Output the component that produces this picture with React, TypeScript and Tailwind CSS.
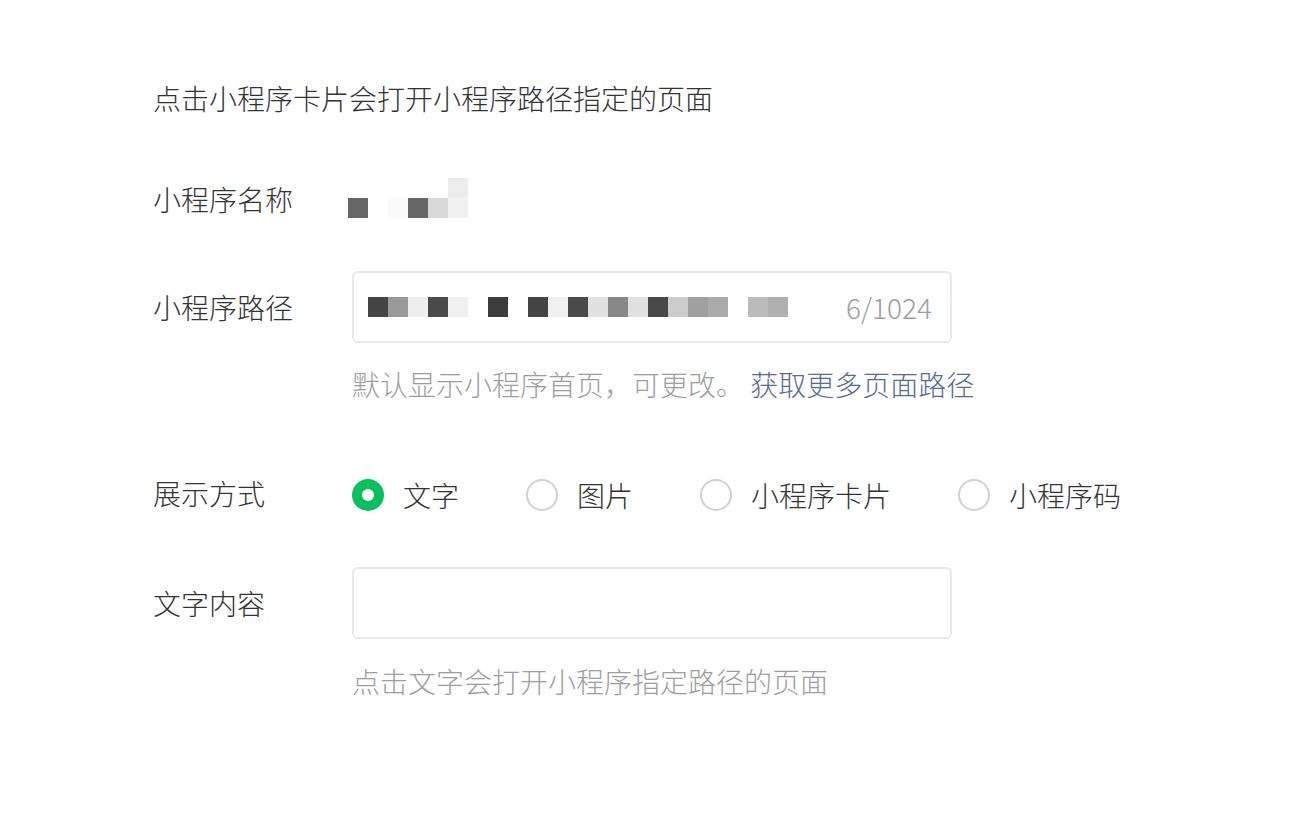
import React from "react";

const F = { fontFamily: '"Noto Sans CJK SC", "Noto Sans", sans-serif' };

const pathBlocks = [
  "#444444", "#999999", "#eeeeee", "#4a4a4a", "#f0f0f0", "", "#3c3c3c", "",
  "#444444", "#f0f0f0", "#4a4a4a", "#e0e0e0", "#888888", "#e0e0e0", "#484848",
  "#cccccc", "#a0a0a0", "#aaaaaa", "", "#bbbbbb", "#b0b0b0",
];

const nameTop = ["", "", "", "", "", "#ededed"];
const nameBottom = ["#666666", "", "#fafafa", "#666666", "#d8d8d8", "#f0f0f0"];

function Blocks({ colors }: { colors: string[] }) {
  return (
    <div className="flex">
      {colors.map((c, i) => (
        <div key={i} className="w-[20px] h-[20px]" style={{ backgroundColor: c || "transparent" }} />
      ))}
    </div>
  );
}

function Radio({ label, checked, first }: { label: string; checked?: boolean; first?: boolean }) {
  return (
    <div className={`flex items-center ${first ? "" : "ml-[67px]"}`}>
      {checked ? (
        <div className="w-[32px] h-[32px] rounded-full bg-[#07c160] flex items-center justify-center">
          <div className="w-[12px] h-[12px] rounded-full bg-white" />
        </div>
      ) : (
        <div className="w-[32px] h-[32px] rounded-full border-2 border-[#d0d1d6] bg-white" />
      )}
      <span className="ml-[19px] text-[28px] leading-[40px] text-[#333333] font-light">{label}</span>
    </div>
  );
}

export default function App() {
  return (
    <div className="w-[1312px] h-[824px] bg-white overflow-hidden font-light" style={F}>
      <div className="pl-[153px] pt-[78px]">
        <div className="text-[28px] leading-[40px] text-[#333333]">点击小程序卡片会打开小程序路径指定的页面</div>

        <div className="flex items-center mt-[61px] h-[40px]">
          <div className="w-[199px] text-[28px] leading-[40px] text-[#333333]">小程序名称</div>
          <div className="flex flex-col -ml-[4px] -mt-[2px]">
            <Blocks colors={nameTop} />
            <Blocks colors={nameBottom} />
          </div>
        </div>

        <div className="flex items-center mt-[52px]">
          <div className="w-[199px] text-[28px] leading-[40px] text-[#333333] -mt-[1px]">小程序路径</div>
          <div className="w-[600px] h-[72px] border-2 border-[#e9e9e9] rounded-[6px] flex items-center pl-[14px] pr-[18px]">
            <Blocks colors={pathBlocks} />
            <div className="flex-1" />
            <span className="whitespace-nowrap text-[28px] leading-[40px] text-[#9e9e9e]">6/1024</span>
          </div>
        </div>

        <div className="pl-[199px] mt-[21px] text-[28px] leading-[40px] text-[#9e9e9e] whitespace-nowrap">
          默认显示小程序首页，可更改。 <span className="text-[#576b95]">获取更多页面路径</span>
        </div>

        <div className="flex items-center mt-[71px] h-[40px]">
          <div className="w-[199px] text-[28px] leading-[40px] text-[#333333] -mt-[4px]">展示方式</div>
          <div className="flex items-center">
            <Radio label="文字" checked first />
            <Radio label="图片" />
            <Radio label="小程序卡片" />
            <Radio label="小程序码" />
          </div>
        </div>

        <div className="flex items-center mt-[52px]">
          <div className="w-[199px] text-[28px] leading-[40px] text-[#333333] -mt-[1px]">文字内容</div>
          <div className="w-[600px] h-[72px] border-2 border-[#e9e9e9] rounded-[6px]" />
        </div>

        <div className="pl-[199px] mt-[22px] text-[28px] leading-[40px] text-[#9e9e9e]">点击文字会打开小程序指定路径的页面</div>
      </div>
    </div>
  );
}
